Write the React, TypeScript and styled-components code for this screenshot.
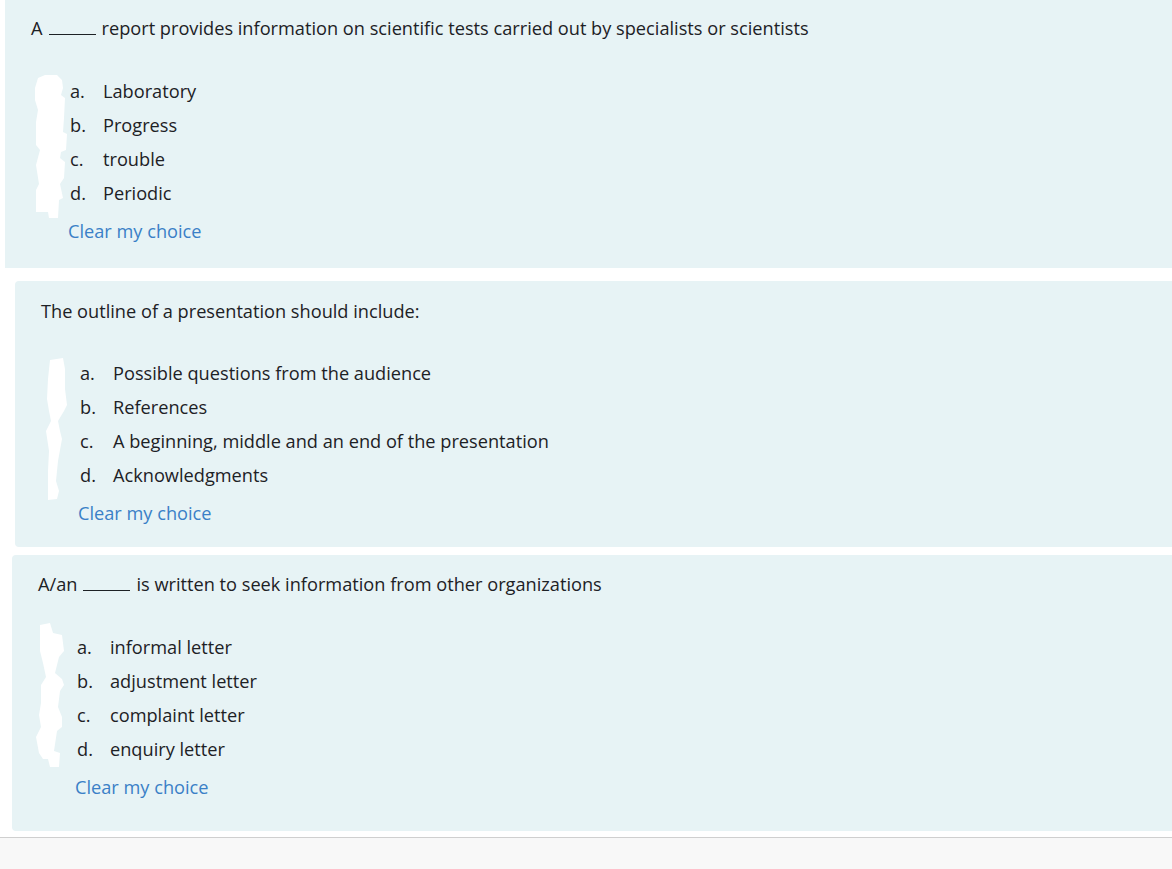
import React from "react";
import styled, { createGlobalStyle } from "styled-components";

const Global = createGlobalStyle`
  html, body { margin: 0; padding: 0; background: #ffffff; }
  body { font-family: "Open Sans", "Noto Sans", "Liberation Sans", sans-serif; color: #1d2125; }
`;

const Page = styled.div`
  width: 1172px;
  height: 869px;
  overflow: hidden;
  display: flex;
  flex-direction: column;
  background: #ffffff;
`;

const Card = styled.section<{ $left: number; $top: number; $bottom: number; $pt: number; $radius: number }>`
  position: relative;
  margin-left: ${(p) => p.$left}px;
  margin-top: ${(p) => p.$top}px;
  margin-right: -10px;
  padding: ${(p) => p.$pt}px 0 ${(p) => p.$bottom}px 26px;
  background: #e7f3f5;
  border-radius: ${(p) => p.$radius}px;
  display: flex;
  flex-direction: column;
`;

const Question = styled.p`
  margin: 0;
  font-size: 18.2px;
  line-height: 24px;
  color: #1d2125;
`;

const Blank = styled.span`
  display: inline-block;
  width: 47px;
  border-bottom: 1px solid #1d2125;
  margin: 0 6px;
  height: 18px;
  vertical-align: baseline;
`;

const Answers = styled.div<{ $mt: number }>`
  margin-top: ${(p) => p.$mt}px;
  padding-left: 39px;
  display: flex;
  flex-direction: column;
`;

const Option = styled.div`
  display: flex;
  align-items: center;
  height: 34px;
  font-size: 18.2px;
  color: #1d2125;
`;

const Letter = styled.span`
  width: 33px;
  flex: none;
`;

const Clear = styled.a`
  margin-top: 9px;
  margin-left: -2px;
  font-size: 18.2px;
  line-height: 24px;
  color: #3a80c7;
  text-decoration: none;
  cursor: pointer;
  align-self: flex-start;
`;

const Redact = styled.svg`
  position: absolute;
  left: 0;
  top: 0;
  overflow: visible;
  pointer-events: none;
`;

const Footer = styled.div`
  margin-top: 6px;
  flex: 1;
  border-top: 1px solid #cfcfcf;
  background: #f8f8f8;
`;

type Q = {
  pre: string;
  post?: string;
  options: string[];
  left: number;
  top: number;
  pt: number;
  mt: number;
  bottom: number;
  radius: number;
  blob: string;
};

const questions: Q[] = [
  {
    pre: "A",
    post: "report provides information on scientific tests carried out by specialists or scientists",
    options: ["Laboratory", "Progress", "trouble", "Periodic"],
    left: 5,
    top: 0,
    pt: 16,
    mt: 34,
    bottom: 25,
    radius: 0,
    blob:
      "M33 78 L40 75 L52 75 L57 80 L58 88 L56 95 L60 98 L59 118 L58 132 L62 134 L61 150 L56 152 L55 158 L60 162 L59 178 L55 184 L58 198 L54 200 L53 218 L44 218 L43 212 L31 212 L31 190 L34 184 L31 165 L35 150 L31 145 L31 122 L33 110 L30 100 L30 88 Z",
  },
  {
    pre: "The outline of a presentation should include:",
    options: [
      "Possible questions from the audience",
      "References",
      "A beginning, middle and an end of the presentation",
      "Acknowledgments",
    ],
    left: 15,
    top: 13,
    pt: 18,
    mt: 33,
    bottom: 22,
    radius: 4,
    blob:
      "M35 79 L48 77 L50 88 L50 108 L52 124 L49 130 L43 140 L45 150 L47 158 L43 180 L41 200 L44 210 L42 218 L33 219 L33 190 L34 170 L31 150 L36 140 L34 130 L32 118 L33 98 Z",
  },
  {
    pre: "A/an",
    post: "is written to seek information from other organizations",
    options: ["informal letter", "adjustment letter", "complaint letter", "enquiry letter"],
    left: 12,
    top: 8,
    pt: 17,
    mt: 34,
    bottom: 32,
    radius: 4,
    blob:
      "M28 70 L38 68 L41 78 L50 80 L52 96 L47 102 L43 118 L50 124 L52 130 L48 136 L46 152 L50 162 L50 172 L45 176 L42 196 L48 198 L47 212 L38 212 L36 204 L31 204 L27 198 L24 182 L29 172 L27 160 L29 148 L29 130 L34 122 L31 108 L28 96 Z",
  },
];

const letters = ["a.", "b.", "c.", "d."];

export default function App() {
  return (
    <Page>
      <Global />
      {questions.map((q, i) => (
        <Card key={i} $left={q.left} $top={q.top} $pt={q.pt} $bottom={q.bottom} $radius={q.radius}>
          <Question>
            {q.pre}
            {q.post !== undefined && (
              <>
                <Blank />
                {q.post}
              </>
            )}
          </Question>
          <Answers $mt={q.mt}>
            {q.options.map((o, j) => (
              <Option key={j}>
                <Letter>{letters[j]}</Letter>
                <span>{o}</span>
              </Option>
            ))}
            <Clear>Clear my choice</Clear>
          </Answers>
          <Redact width="1" height="1">
            <path d={q.blob} fill="#ffffff" />
          </Redact>
        </Card>
      ))}
      <Footer />
    </Page>
  );
}
